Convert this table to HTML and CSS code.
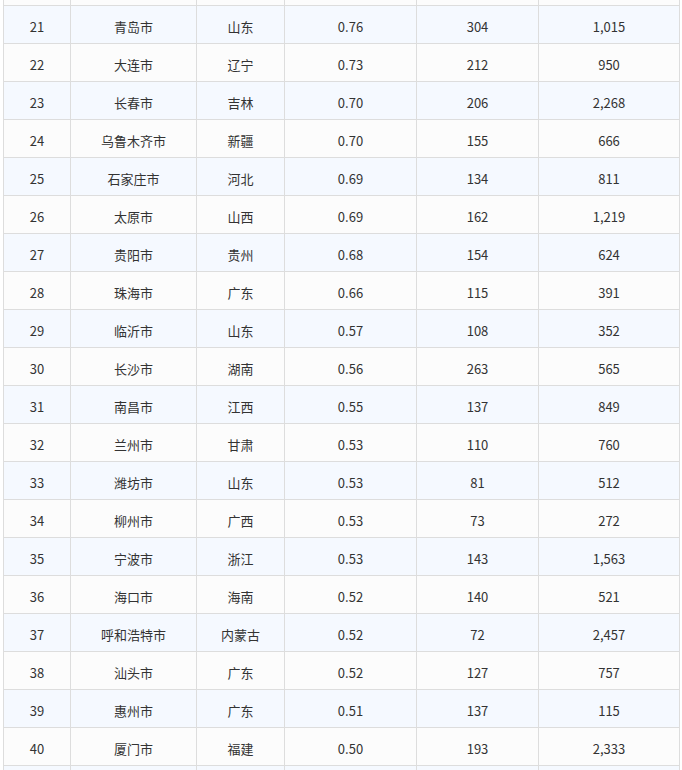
FILE: index.html
```html
<!DOCTYPE html>
<html lang="zh">
<head>
<meta charset="utf-8">
<link rel="stylesheet" href="styles.css">
</head>
<body>
<table class="rank">
  <colgroup>
    <col class="c1"><col class="c2"><col class="c3"><col class="c4"><col class="c5"><col class="c6">
  </colgroup>
  <tbody>
    <tr class="edge top"><td></td><td></td><td></td><td></td><td></td><td></td></tr>
    <tr class="odd"><td>21</td><td>青岛市</td><td>山东</td><td>0.76</td><td>304</td><td>1,015</td></tr>
    <tr><td>22</td><td>大连市</td><td>辽宁</td><td>0.73</td><td>212</td><td>950</td></tr>
    <tr class="odd"><td>23</td><td>长春市</td><td>吉林</td><td>0.70</td><td>206</td><td>2,268</td></tr>
    <tr><td>24</td><td>乌鲁木齐市</td><td>新疆</td><td>0.70</td><td>155</td><td>666</td></tr>
    <tr class="odd"><td>25</td><td>石家庄市</td><td>河北</td><td>0.69</td><td>134</td><td>811</td></tr>
    <tr><td>26</td><td>太原市</td><td>山西</td><td>0.69</td><td>162</td><td>1,219</td></tr>
    <tr class="odd"><td>27</td><td>贵阳市</td><td>贵州</td><td>0.68</td><td>154</td><td>624</td></tr>
    <tr><td>28</td><td>珠海市</td><td>广东</td><td>0.66</td><td>115</td><td>391</td></tr>
    <tr class="odd"><td>29</td><td>临沂市</td><td>山东</td><td>0.57</td><td>108</td><td>352</td></tr>
    <tr><td>30</td><td>长沙市</td><td>湖南</td><td>0.56</td><td>263</td><td>565</td></tr>
    <tr class="odd"><td>31</td><td>南昌市</td><td>江西</td><td>0.55</td><td>137</td><td>849</td></tr>
    <tr><td>32</td><td>兰州市</td><td>甘肃</td><td>0.53</td><td>110</td><td>760</td></tr>
    <tr class="odd"><td>33</td><td>潍坊市</td><td>山东</td><td>0.53</td><td>81</td><td>512</td></tr>
    <tr><td>34</td><td>柳州市</td><td>广西</td><td>0.53</td><td>73</td><td>272</td></tr>
    <tr class="odd"><td>35</td><td>宁波市</td><td>浙江</td><td>0.53</td><td>143</td><td>1,563</td></tr>
    <tr><td>36</td><td>海口市</td><td>海南</td><td>0.52</td><td>140</td><td>521</td></tr>
    <tr class="odd"><td>37</td><td>呼和浩特市</td><td>内蒙古</td><td>0.52</td><td>72</td><td>2,457</td></tr>
    <tr><td>38</td><td>汕头市</td><td>广东</td><td>0.52</td><td>127</td><td>757</td></tr>
    <tr class="odd"><td>39</td><td>惠州市</td><td>广东</td><td>0.51</td><td>137</td><td>115</td></tr>
    <tr><td>40</td><td>厦门市</td><td>福建</td><td>0.50</td><td>193</td><td>2,333</td></tr>
    <tr class="edge bottom odd"><td></td><td></td><td></td><td></td><td></td><td></td></tr>
  </tbody>
</table>
</body>
</html>
```

FILE: styles.css
```css
html, body {
  margin: 0;
  padding: 0;
  background: #ffffff;
}
body {
  font-family: "Noto Sans CJK SC", "Noto Sans", sans-serif;
  font-size: 13px;
  color: #333333;
  overflow: hidden;
}
.rank {
  margin-left: 3px;
  border-collapse: collapse;
  table-layout: fixed;
  width: 676px;
}
.c1 { width: 67px; }
.c2 { width: 126px; }
.c3 { width: 88px; }
.c4 { width: 132px; }
.c5 { width: 122px; }
.c6 { width: 141px; }
.rank td {
  border: 1px solid #dddddd;
  height: 33px;
  padding: 4px 0 0 0;
  text-align: center;
  vertical-align: middle;
  line-height: 16px;
  background: #fcfcfc;
}
.rank tr.odd td {
  background: #f5f9ff;
}
.rank tr.edge td {
  height: 5px;
  padding: 0;
}
.rank tr.top td {
  border-top: none;
}
.rank tr.bottom td {
  border-bottom: none;
}
```
